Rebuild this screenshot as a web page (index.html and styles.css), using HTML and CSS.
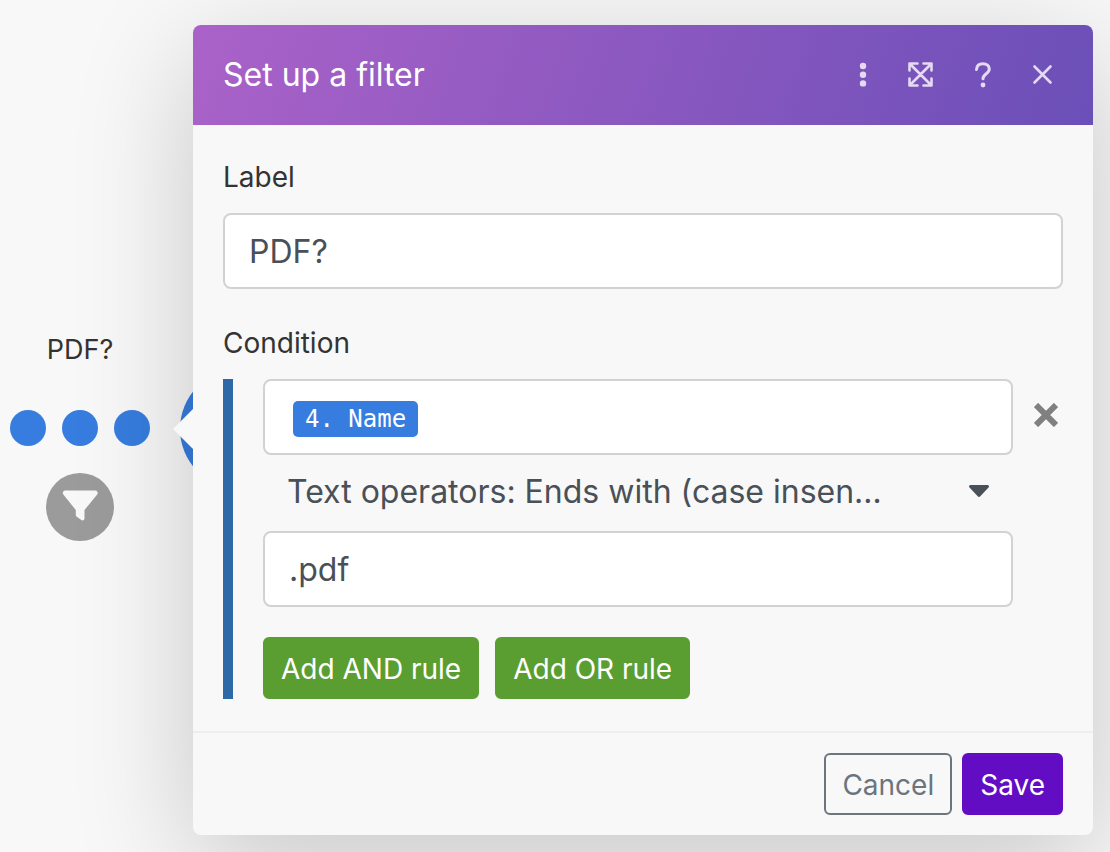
FILE: index.html
```html
<!DOCTYPE html>
<html lang="en">

<head>
    <meta charset="UTF-8">
    <meta name="viewport" content="width=device-width, initial-scale=1.0">
    <title>Set up a filter</title>
    <link rel="stylesheet" href="styles.css">
</head>

<body>
    <div class="canvas">
        <div class="route">
            <span class="route-name">PDF?</span>
            <div class="route-dots">
                <span class="dot"></span>
                <span class="dot"></span>
                <span class="dot"></span>
            </div>
            <button type="button" class="route-filter" aria-label="Filter">
                <svg width="68" height="68" viewBox="0 0 68 68">
                    <path d="M19.500 17.500h29.500a2.500 2.500 0 0 1 2 4.200L38.500 37v8.500a2 2 0 0 1-3.200 1.500l-4.500-3.200a2 2 0 0 1-1-1.800v-5L17.500 21.700a2.500 2.500 0 0 1 2-4.200z" fill="#f8f8f8"/>
                </svg>
            </button>
        </div>
        <span class="module"></span>
    </div>

    <form class="panel">
        <header class="panel-header">
            <h1>Set up a filter</h1>
            <div class="panel-tools">
                <button type="button" aria-label="More">
                    <svg width="40" height="40" viewBox="0 0 40 40" fill="currentColor">
                        <circle cx="20" cy="11" r="3.200"/>
                        <circle cx="20" cy="19.700" r="3.200"/>
                        <circle cx="20" cy="28.400" r="3.200"/>
                    </svg>
                </button>
                <button type="button" aria-label="Expand">
                    <svg width="40" height="40" viewBox="0 0 40 40" fill="none" stroke="currentColor" stroke-width="2.600" stroke-linecap="round" stroke-linejoin="round">
                        <path d="M6.500 15.500V8.500h8M20.500 8.500h8v7M28.500 23.500v7h-8M14.500 30.500h-8v-7M7.500 9.500l20 20M27.500 9.500l-20 20"/>
                    </svg>
                </button>
                <button type="button" aria-label="Help">
                    <svg width="40" height="40" viewBox="0 0 40 40" fill="none" stroke="currentColor" stroke-width="3" stroke-linecap="round">
                        <path d="M13.500 14.500c.2-4 3-5.800 6.500-5.800 3.700 0 6.300 2.300 6.300 5.400 0 4.700-6.300 4.600-6.300 9.600"/>
                        <circle cx="20" cy="30" r="2.400" fill="currentColor" stroke="none"/>
                    </svg>
                </button>
                <button type="button" aria-label="Close">
                    <svg width="40" height="40" viewBox="0 0 40 40" fill="none" stroke="currentColor" stroke-width="2.600" stroke-linecap="round">
                        <path d="M11.500 11.500l16 16M27.500 11.500l-16 16"/>
                    </svg>
                </button>
            </div>
        </header>

        <div class="panel-body">
            <div class="form-group">
                <label for="filterLabel">Label</label>
                <input type="text" class="form-control" id="filterLabel" value="PDF?">
            </div>

            <div class="form-group" role="group" aria-labelledby="conditionLabel">
                <span class="group-label" id="conditionLabel">Condition</span>
                <div class="condition">
                    <div class="rule">
                        <div class="rule-fields">
                            <div class="form-control rule-value" contenteditable="true" role="textbox" aria-label="Field"><span class="pill" contenteditable="false">4. Name</span></div>
                            <div class="select-wrap">
                                <select class="operator" aria-label="Operator">
                                    <option>Text operators: Ends with (case insensitive)</option>
                                </select>
                                <svg class="caret" width="20" height="12" viewBox="0 0 20 12">
                                    <path d="M1.500 0h17a1.500 1.500 0 0 1 1 2.600l-8 8.500a2 2 0 0 1-3 0l-8-8.500a1.500 1.500 0 0 1 1-2.600z" fill="#495057"/>
                                </svg>
                            </div>
                            <input type="text" class="form-control" aria-label="Value" value=".pdf">
                        </div>
                        <button type="button" class="rule-remove" aria-label="Remove rule">
                            <svg width="24" height="24" viewBox="0 0 24 24" fill="none" stroke="#808080" stroke-width="6">
                                <path d="M2 2l20 20M22 2L2 22"/>
                            </svg>
                        </button>
                    </div>
                    <div class="rule-buttons">
                        <button type="button" class="btn btn-success">Add AND rule</button>
                        <button type="button" class="btn btn-success">Add OR rule</button>
                    </div>
                </div>
            </div>
        </div>

        <footer class="panel-footer">
            <button type="button" class="btn btn-outline">Cancel</button>
            <button type="submit" class="btn btn-primary">Save</button>
        </footer>
    </form>
</body>

</html>
```
FILE: styles.css
```css
* {
    box-sizing: border-box;
}

body {
    display: flex;
    align-items: flex-start;
    margin: 0;
    min-height: 100vh;
    background-color: #f8f8f8;
    color: #333;
    font-family: Inter, "Liberation Sans", sans-serif;
    overflow: hidden;
}

button {
    padding: 0;
    border: 0;
    background: none;
    font-family: inherit;
    cursor: pointer;
}

svg {
    display: block;
}

/* scenario canvas */
.canvas {
    position: relative;
    flex: 0 0 193px;
    padding: 330px 0 0 10px;
}

.route {
    display: flex;
    flex-direction: column;
    align-items: center;
    width: 140px;
}

.route-name {
    font-size: 27px;
    line-height: 40px;
}

.route-dots {
    display: flex;
    gap: 16px;
    margin: 40px 0 27px;
}

.dot {
    width: 36px;
    height: 36px;
    border-radius: 50%;
    background-color: #377ddf;
}

.route-filter {
    width: 68px;
    height: 68px;
    border-radius: 50%;
    background-color: #9b9b9b;
}

.module {
    position: absolute;
    top: 369px;
    left: 180px;
    width: 120px;
    height: 120px;
    border-radius: 50%;
    background-color: #377ddf;
}

/* filter panel */
.panel {
    position: relative;
    flex: 1;
    min-width: 0;
    margin: 25px 17px 17px 0;
    border-radius: 8px;
    background-color: #f8f8f8;
    box-shadow: 0 30px 120px rgba(0, 0, 0, 0.2);
}

.panel::before {
    content: "";
    position: absolute;
    top: 384px;
    left: -20px;
    border: 20px solid transparent;
    border-left: 0;
    border-right-color: #f8f8f8;
}

.panel-header {
    display: flex;
    align-items: center;
    justify-content: space-between;
    height: 100px;
    padding: 0 30px;
    border-radius: 8px 8px 0 0;
    background: linear-gradient(110deg, #aa62c8, #6b4fb8);
    color: #fff;
}

.panel-header h1 {
    margin: 0;
    font-size: 32px;
    font-weight: 400;
    line-height: 40px;
}

.panel-tools {
    display: flex;
    gap: 20px;
}

.panel-tools button {
    color: #e5daf2;
}

.panel-body {
    padding: 30px 30px 32px;
}

.form-group + .form-group {
    margin-top: 32px;
}

label,
.group-label {
    display: block;
    margin-bottom: 14px;
    font-size: 28px;
    line-height: 44px;
}

.form-control {
    display: block;
    width: 100%;
    height: 76px;
    padding: 0 24px;
    border: 2px solid #d2d2d2;
    border-radius: 8px;
    background-color: #fff;
    color: #495057;
    font-family: inherit;
    font-size: 32px;
}

.condition {
    padding-left: 30px;
    border-left: 10px solid #2d69a6;
}

.rule {
    display: flex;
    align-items: flex-start;
}

.rule-fields {
    flex: 1;
    min-width: 0;
}

.rule-value {
    display: flex;
    align-items: center;
    padding: 4px 28px 0;
}

.pill {
    padding: 0 12px;
    border-radius: 5px;
    background-color: #377ddf;
    color: #fff;
    font-family: "DejaVu Sans Mono", monospace;
    font-size: 24px;
    line-height: 36px;
}

.select-wrap {
    position: relative;
}

.operator {
    display: block;
    width: 100%;
    height: 76px;
    padding: 0 130px 4px 24px;
    border: 0;
    appearance: none;
    background: none;
    color: #495057;
    font-family: inherit;
    font-size: 32px;
    text-overflow: ellipsis;
}

.caret {
    position: absolute;
    top: 30px;
    right: 24px;
    pointer-events: none;
}

.rule-remove {
    display: flex;
    align-items: center;
    justify-content: flex-end;
    width: 50px;
    height: 72px;
    padding-right: 5px;
}

.rule-buttons {
    display: flex;
    gap: 16px;
    margin-top: 30px;
}

.btn {
    height: 62px;
    padding: 2px 16px 0;
    border: 2px solid transparent;
    border-radius: 6px;
    font-size: 28px;
}

.btn-success {
    border-color: #5a9e32;
    background-color: #5a9e32;
    color: #fff;
}

.btn-outline {
    border-color: #6c757d;
    color: #6c757d;
}

.btn-primary {
    border-color: #620dc4;
    background-color: #620dc4;
    color: #fff;
}

.panel-footer {
    display: flex;
    justify-content: flex-end;
    gap: 10px;
    padding: 20px 30px;
    border-top: 2px solid #eee;
}
```
